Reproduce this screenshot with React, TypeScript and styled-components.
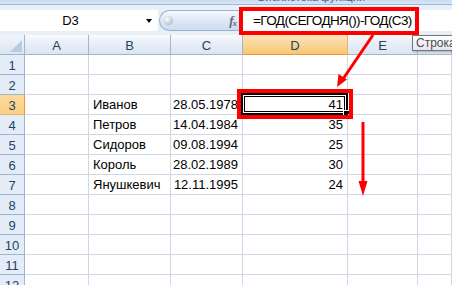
import React from 'react';
import styled, { createGlobalStyle, css } from 'styled-components';

const GlobalStyle = createGlobalStyle`
  html, body {
    margin: 0;
    padding: 0;
    background: #fff;
  }
`;

const Page = styled.div`
  position: relative;
  width: 452px;
  height: 285px;
  overflow: hidden;
  background: #e9eff7;
  font-family: 'Liberation Sans', Arial, sans-serif;
`;

const RibbonEdge = styled.div`
  height: 4px;
  overflow: hidden;
  background: linear-gradient(#c9daf0, #dde8f6);
  border-bottom: 1px solid #9ab7dc;
`;

const GroupLabel = styled.div`
  margin-top: -8px;
  padding-left: 258px;
  font-size: 11px;
  line-height: 11px;
  color: #2d5ea7;
`;

const FormulaBar = styled.div`
  display: flex;
  height: 21px;
  margin-top: 5px;
  margin-bottom: 4px;
`;

const NameBox = styled.div`
  position: relative;
  width: 158px;
  display: flex;
  align-items: center;
  justify-content: center;
  padding-right: 17px;
  box-sizing: border-box;
  background: #fff;
  font-size: 13px;
  color: #000;
`;

const DropArrow = styled.span`
  position: absolute;
  right: 6px;
  top: 9px;
  width: 0;
  height: 0;
  border-left: 3.5px solid transparent;
  border-right: 3.5px solid transparent;
  border-top: 4px solid #000;
`;

const Splitter = styled.div`
  width: 81px;
  margin-left: 1px;
  display: flex;
  align-items: center;
  justify-content: space-between;
  padding: 0 4px 0 4px;
  box-sizing: border-box;
  border: 1px solid #98b1d3;
  border-right: none;
  border-radius: 11px 0 0 11px;
  background: linear-gradient(#f7f9fc, #dbe6f4 55%, #cddcf0);
`;

const Knob = styled.span`
  width: 9px;
  height: 9px;
  border-radius: 50%;
  background: radial-gradient(circle at 35% 35%, #ffffff, #b9c2cc 70%, #8e98a4);
`;

const Fx = styled.span`
  font-family: 'Liberation Serif', serif;
  font-style: italic;
  font-weight: bold;
  font-size: 13px;
  color: #606a78;
  letter-spacing: -1px;

  & sub {
    font-size: 9px;
    vertical-align: -1px;
  }
`;

const FormulaInput = styled.div`
  flex: 1;
  display: flex;
  align-items: center;
  padding-left: 13px;
  background: #fff;
  font-size: 13.5px;
  letter-spacing: -0.6px;
  color: #000;
  white-space: nowrap;
`;

const Sheet = styled.div`
  display: grid;
  grid-template-columns: 25px 64px 82px 72px 105px 70px 1fr;
  grid-auto-rows: 20px;
  background: #fff;
`;

const headerBase = css`
  display: flex;
  align-items: center;
  justify-content: center;
  box-sizing: border-box;
  font-size: 13px;
  color: #27415f;
  border-right: 1px solid #9eb6ce;
  border-bottom: 1px solid #9eb6ce;
`;

const Corner = styled.div`
  position: relative;
  box-sizing: border-box;
  background: linear-gradient(#f2f6fb, #dae4f1);
  border-right: 1px solid #9eb6ce;
  border-bottom: 1px solid #9eb6ce;

  &::after {
    content: '';
    position: absolute;
    right: 2px;
    bottom: 2px;
    width: 0;
    height: 0;
    border-left: 12px solid transparent;
    border-bottom: 12px solid #b7cbe3;
  }
`;

const ColHeader = styled.div<{ $active?: boolean }>`
  ${headerBase}
  padding-top: 2px;
  background: ${(p) =>
    p.$active ? 'linear-gradient(#fbe3b5, #f9d69a 50%, #f6c76f)' : 'linear-gradient(#f8fafd, #e6edf7 50%, #dbe5f2)'};
  ${(p) => p.$active && 'border-bottom-color: #f29536; border-right-color: #f2b25e;'}
`;

const RowHeader = styled.div<{ $active?: boolean }>`
  ${headerBase}
  padding-top: 2px;
  background: ${(p) => (p.$active ? 'linear-gradient(#fbdb9e, #f8cf85)' : '#e4ecf7')};
  ${(p) => p.$active && 'border-right-color: #f29536; border-bottom-color: #f2b25e;'}
`;

const Cell = styled.div<{ $align?: 'left' | 'right' }>`
  position: relative;
  display: flex;
  align-items: flex-end;
  justify-content: ${(p) => (p.$align === 'right' ? 'flex-end' : 'flex-start')};
  padding: 0 4px 2px 4px;
  box-sizing: border-box;
  border-right: 1px solid #d0d7e5;
  border-bottom: 1px solid #d0d7e5;
  font-size: 13px;
  color: #000;
  white-space: nowrap;
`;

const Selection = styled.div`
  position: absolute;
  left: -2px;
  top: -2px;
  right: -1px;
  bottom: -1px;
  border: 2px solid #000;
  box-shadow: inset 0 0 0 1px #fff, inset 0 0 0 2px #000;
  pointer-events: none;

  &::after {
    content: '';
    position: absolute;
    right: -4px;
    bottom: -4px;
    width: 5px;
    height: 5px;
    background: #000;
    border: 1px solid #fff;
  }
`;

const Highlight = styled.div<{ $l: number; $t: number; $w: number; $h: number }>`
  position: absolute;
  left: ${(p) => p.$l}px;
  top: ${(p) => p.$t}px;
  width: ${(p) => p.$w}px;
  height: ${(p) => p.$h}px;
  box-sizing: border-box;
  border: 4px solid #f00;
  pointer-events: none;
`;

const Tooltip = styled.div`
  position: absolute;
  left: 412px;
  top: 35px;
  height: 14px;
  padding: 0 4px 0 3px;
  display: flex;
  align-items: center;
  background: linear-gradient(#ffffff, #e4e5f0);
  border: 1px solid #767676;
  box-shadow: 1px 1px 2px rgba(0, 0, 0, 0.25);
  font-size: 12px;
  color: #4c4c4c;
  white-space: nowrap;
`;

const Arrows = styled.svg`
  position: absolute;
  left: 0;
  top: 0;
  pointer-events: none;
`;

const columns = ['A', 'B', 'C', 'D', 'E', 'F'];

const data: Record<number, [string, string, string]> = {
  3: ['Иванов', '28.05.1978', '41'],
  4: ['Петров', '14.04.1984', '35'],
  5: ['Сидоров', '09.08.1994', '25'],
  6: ['Король', '28.02.1989', '30'],
  7: ['Янушкевич', '12.11.1995', '24'],
};

const rows = Array.from({ length: 12 }, (_, i) => i + 1);

export default function App() {
  return (
    <Page>
      <GlobalStyle />
      <RibbonEdge>
        <GroupLabel>Библиотека функций</GroupLabel>
      </RibbonEdge>
      <FormulaBar>
        <NameBox>
          D3
          <DropArrow />
        </NameBox>
        <Splitter>
          <Knob />
          <Fx>
            f<sub>x</sub>
          </Fx>
        </Splitter>
        <FormulaInput>=ГОД(СЕГОДНЯ())-ГОД(C3)</FormulaInput>
      </FormulaBar>
      <Sheet>
        <Corner />
        {columns.map((c) => (
          <ColHeader key={c} $active={c === 'D'}>
            {c}
          </ColHeader>
        ))}
        {rows.map((r) => {
          const row = data[r];
          return (
            <React.Fragment key={r}>
              <RowHeader $active={r === 3}>{r}</RowHeader>
              <Cell />
              <Cell>{row?.[0]}</Cell>
              <Cell $align="right">{row?.[1]}</Cell>
              <Cell $align="right">
                {row?.[2]}
                {r === 3 && <Selection />}
              </Cell>
              <Cell />
              <Cell />
            </React.Fragment>
          );
        })}
      </Sheet>
      <Tooltip>Строка формул</Tooltip>
      <Highlight $l={239} $t={7} $w={180} $h={28} />
      <Highlight $l={237} $t={89} $w={116} $h={30} />
      <Arrows width="452" height="285" viewBox="0 0 452 285">
        <line x1="373" y1="35" x2="343" y2="79" stroke="#f00" strokeWidth="3" />
        <polygon points="337,87 338.5,74 347,79.5" fill="#f00" />
        <line x1="363" y1="122" x2="363" y2="184" stroke="#f00" strokeWidth="3" />
        <polygon points="358.5,181 367.5,181 363,196" fill="#f00" />
      </Arrows>
    </Page>
  );
}
